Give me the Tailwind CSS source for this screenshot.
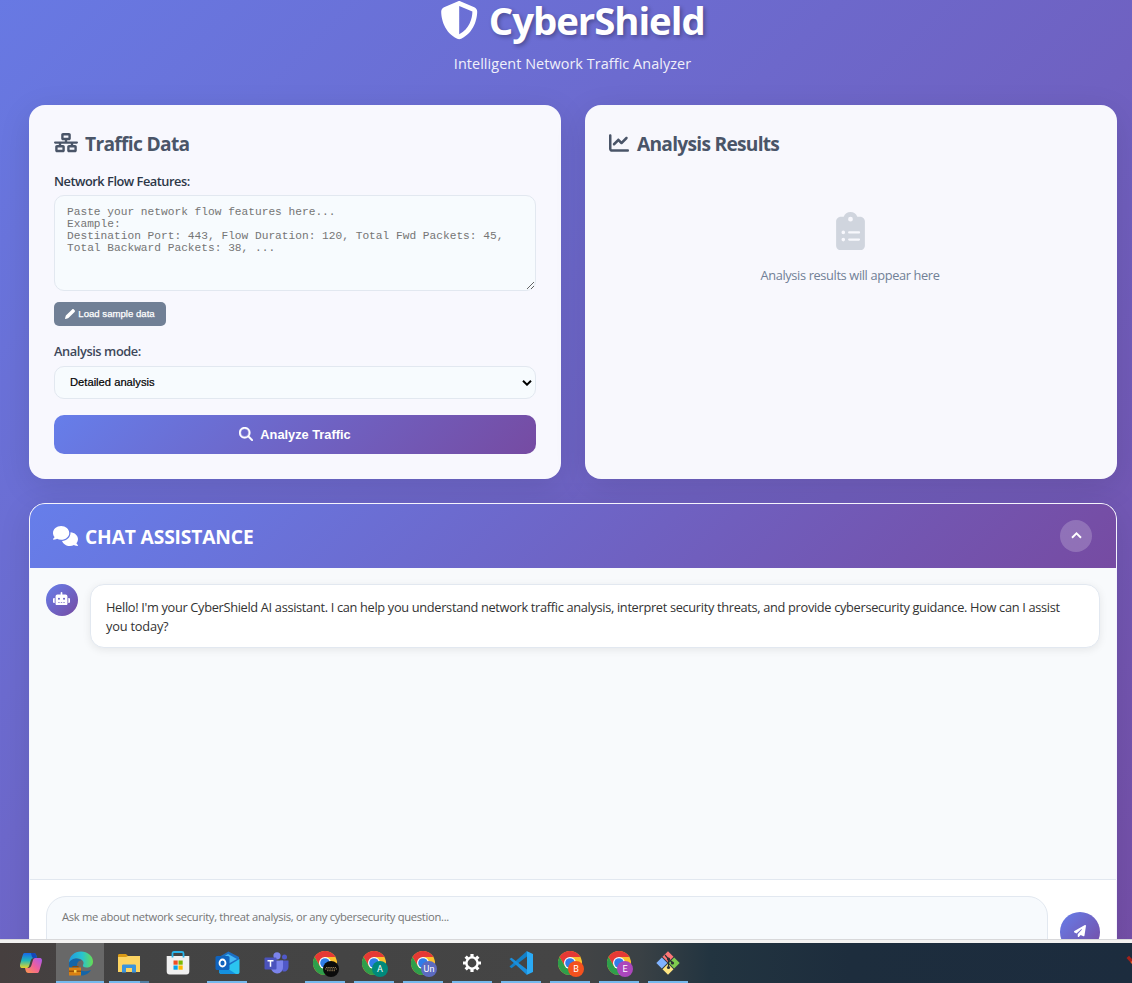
<!DOCTYPE html>
<html lang="en">
<head>
<meta charset="utf-8">
<title>CyberShield</title>
<script src="https://cdn.jsdelivr.net/npm/@tailwindcss/browser@4"></script>
</head>
<body class="w-[1132px] h-[983px] overflow-hidden flex flex-col font-['Open_Sans','Noto_Sans',sans-serif]">
<svg class="hidden">
  <defs>
    <symbol id="chrome" viewBox="0 0 24 24">
      <circle cx="12" cy="12" r="12" fill="#fbc02d"/>
      <path d="M12 6h10.4A12 12 0 0 0 1.6 6l5.2 9Z" fill="#e53935"/>
      <path d="M1.6 6A12 12 0 0 0 12 24l5.2-9-5.2 3-5.2-3Z" fill="#2e9e4b"/>
      <circle cx="12" cy="12" r="6" fill="#fff"/><circle cx="12" cy="12" r="4.8" fill="#2f7de9"/>
    </symbol>
  </defs>
</svg>
<main class="h-[939px] shrink-0 overflow-hidden bg-[linear-gradient(135deg,#667eea_-12%,#764ba2_110%)] pl-[29px] pr-[15px] flex flex-col">
  <header class="h-[105px] shrink-0 text-white text-center pr-px">
    <h1 class="h-[41px] flex items-center justify-center gap-[10px] text-[38.4px] font-bold leading-[41px] [text-shadow:2px_2px_4px_rgba(0,0,0,0.3)]">
      <svg class="size-[38.4px] overflow-visible" viewBox="0 0 512 512" fill="currentColor"><path d="M256 0c4.600 0 9.200 1 13.400 2.900L457.700 82.800c22 9.300 38.400 31 38.300 57.200c-.5 99.200-41.300 280.700-213.600 363.200c-16.700 8-36.100 8-52.800 0C57.300 420.700 16.500 239.200 16 140c-.1-26.200 16.300-47.900 38.300-57.200L242.700 2.900C246.800 1 251.400 0 256 0zm0 66.800V444.800C394 378 431.100 230.100 432 141.400L256 66.800z"/></svg>
      <span class="tracking-[-1.05px]">CyberShield</span>
    </h1>
    <p class="mt-[12px] text-[14.4px] leading-[22px] opacity-90"><span class="tracking-[0.07px]">Intelligent Network Traffic Analyzer</span></p>
  </header>
  <div class="grid grid-cols-2 gap-6 h-[374px] shrink-0">
    <section class="rounded-2xl bg-[#f8f8fe] px-[25px] pt-[25px] shadow-[0_8px_32px_rgba(0,0,0,0.1)] flex flex-col items-start">
      <h2 class="h-[27px] flex items-center gap-[7px] text-[#4a5568] text-[19.2px] font-bold">
        <svg class="w-[24px] h-[19.2px] -mt-px" viewBox="0 0 640 512" fill="currentColor"><path d="M256 64H384v64H256V64zM240 0c-26.500 0-48 21.500-48 48v96c0 26.500 21.500 48 48 48h48v32H32c-17.700 0-32 14.300-32 32s14.300 32 32 32h96v32H80c-26.500 0-48 21.500-48 48v96c0 26.500 21.500 48 48 48H240c26.500 0 48-21.500 48-48V368c0-26.500-21.500-48-48-48H192V288H448v32H400c-26.500 0-48 21.500-48 48v96c0 26.500 21.500 48 48 48H560c26.500 0 48-21.500 48-48V368c0-26.500-21.500-48-48-48H512V288h96c17.700 0 32-14.300 32-32s-14.300-32-32-32H352V192h48c26.500 0 48-21.500 48-48V48c0-26.500-21.500-48-48-48H240zM96 448V384H224v64H96zm320-64H544v64H416V384z"/></svg>
        <span class="mt-[2px] tracking-[-0.68px]">Traffic Data</span>
      </h2>
      <label class="mt-[14px] h-[20px] leading-[20px] text-[12.8px] font-semibold text-[#2d3748] tracking-[-0.48px]">Network Flow Features:</label>
      <textarea class="mt-1 w-[482px] h-[96px] shrink-0 rounded-[10px] border border-[#e2e8f0] bg-[#f7fbfe] px-3 py-[10px] resize-y font-['Liberation_Mono',monospace] text-[11.2px] leading-[12px] placeholder:text-[#757575]" placeholder="Paste your network flow features here...&#10;Example:&#10;Destination Port: 443, Flow Duration: 120, Total Fwd Packets: 45, Total Backward Packets: 38, ..."></textarea>
      <button class="mt-[11px] w-[112px] h-6 shrink-0 rounded-[5px] bg-[#718096] text-white flex items-center justify-center gap-[3px] font-['Liberation_Sans',sans-serif] text-[9.6px] [-webkit-text-stroke:0.25px_white]">
        <svg class="size-[10px]" viewBox="0 0 512 512" fill="currentColor"><path d="M362.700 19.300L58.600 323.500c-10.400 10.400-18 23.300-22.200 37.400L1 481.200C-1.500 489.700 .8 498.800 7 505s15.300 8.500 23.700 6.100l120.300-35.400c14.100-4.200 27-11.800 37.400-22.200L492.700 149.300c25-25 25-65.500 0-90.500L453.300 19.300c-25-25-65.500-25-90.500 0z"/></svg>
        <span>Load sample data</span>
      </button>
      <label class="mt-[15px] h-[20px] leading-[20px] text-[12.8px] font-semibold text-[#3d4759] tracking-[-0.41px]">Analysis mode:</label>
      <div class="mt-[5px] w-[482px] h-[33px] shrink-0 rounded-[10px] border border-[#e2e8f0] bg-[#f7fbfe] pl-[15px] pr-[3px] flex items-center justify-between font-['Liberation_Sans',sans-serif] text-[11.2px] text-black [-webkit-text-stroke:0.2px_black]">
        <span>Detailed analysis</span>
        <svg class="w-[10px] h-[6px]" viewBox="0 0 10 6" fill="none" stroke="currentColor" stroke-width="2"><path d="M1 .8 5 4.700 9 .8"/></svg>
      </div>
      <button class="mt-4 w-[482px] h-[39px] shrink-0 rounded-[10px] bg-[linear-gradient(135deg,#667eea,#764ba2)] text-white flex items-center justify-center gap-[7px] font-['Liberation_Sans',sans-serif] font-bold text-[12.8px]">
        <svg class="size-[14px] -mt-[2px]" viewBox="0 0 512 512" fill="currentColor" stroke="currentColor" stroke-width="14"><path d="M416 208c0 45.900-14.900 88.300-40 122.700L502.600 457.400c12.500 12.500 12.500 32.800 0 45.300s-32.800 12.500-45.300 0L330.700 376c-34.400 25.200-76.800 40-122.700 40C93.100 416 0 322.900 0 208S93.100 0 208 0S416 93.100 416 208zM208 352a144 144 0 1 0 0-288 144 144 0 1 0 0 288z"/></svg>
        <span>Analyze Traffic</span>
      </button>
    </section>
    <section class="rounded-2xl bg-[#f8f8fd] px-6 pt-[25px] shadow-[0_8px_32px_rgba(0,0,0,0.1)] flex flex-col">
      <h2 class="h-[27px] flex items-center gap-2 text-[#4a5568] text-[19.2px] font-bold">
        <svg class="size-[20px] -mt-[2px]" viewBox="0 0 512 512" fill="currentColor"><path d="M64 64c0-17.700-14.300-32-32-32S0 46.300 0 64V400c0 44.200 35.800 80 80 80H480c17.700 0 32-14.300 32-32s-14.300-32-32-32H80c-8.800 0-16-7.200-16-16V64zm406.600 86.600c12.500-12.500 12.500-32.800 0-45.300s-32.800-12.500-45.300 0L320 210.700l-57.400-57.400c-12.500-12.500-32.800-12.500-45.300 0l-112 112c-12.500 12.500-12.500 32.800 0 45.300s32.800 12.500 45.300 0L240 221.300l57.400 57.400c12.500 12.500 32.800 12.500 45.300 0l128-128z"/></svg>
        <span class="mt-[2px] tracking-[-0.74px]">Analysis Results</span>
      </h2>
      <div class="mt-[55px] pr-[2px] flex flex-col items-center text-[#718096]">
        <svg class="w-[29px] h-[38.400px] text-[#d0d5de]" viewBox="0 0 384 512" fill="currentColor"><path d="M192 0c-41.800 0-77.400 26.700-90.500 64H64C28.700 64 0 92.700 0 128V448c0 35.300 28.700 64 64 64H320c35.300 0 64-28.700 64-64V128c0-35.300-28.700-64-64-64H282.500C269.400 26.700 233.800 0 192 0zm0 64a32 32 0 1 1 0 64 32 32 0 1 1 0-64zM72 272a24 24 0 1 1 48 0 24 24 0 1 1 -48 0zm104-16H304c8.800 0 16 7.200 16 16s-7.200 16-16 16H176c-8.800 0-16-7.200-16-16s7.200-16 16-16zM72 368a24 24 0 1 1 48 0 24 24 0 1 1 -48 0zm88 0c0-8.800 7.200-16 16-16H304c8.800 0 16 7.200 16 16s-7.200 16-16 16H176c-8.800 0-16-7.200-16-16z"/></svg>
        <p class="mt-[15px] text-[12.8px] leading-[20px] tracking-[-0.36px]">Analysis results will appear here</p>
      </div>
    </section>
  </div>
  <section class="mt-6 h-[500px] shrink-0 rounded-2xl border border-[#f5f4fd] overflow-hidden bg-white shadow-[0_8px_32px_rgba(0,0,0,0.1)]">
    <div class="h-16 pl-[23px] pr-6 flex items-center justify-between bg-[linear-gradient(135deg,#667eea,#764ba2)] text-white">
      <h2 class="flex items-center gap-[7px] text-[19.2px] font-bold leading-[28px] mt-[2px]">
        <svg class="w-[25px] h-[20px] -mt-[2px]" viewBox="0 0 640 512" fill="currentColor"><path d="M208 352c114.900 0 208-78.800 208-176S322.900 0 208 0S0 78.800 0 176c0 38.600 14.700 74.300 39.600 103.400c-3.500 9.400-8.700 17.700-14.200 24.700c-4.800 6.200-9.700 11-13.300 14.300c-1.800 1.600-3.300 2.900-4.300 3.700c-.5 .4-.9 .7-1.100 .8l-.2 .2C1 327.200-1.400 334.400 .8 340.900S9.100 352 16 352c21.800 0 43.800-5.600 62.100-12.500c9.200-3.500 17.800-7.400 25.200-11.400C134.100 343.300 169.800 352 208 352zM448 176c0 112.300-99.100 196.900-216.500 207C255.800 457.400 336.400 512 432 512c38.200 0 73.900-8.700 104.700-23.900c7.500 4 16 7.900 25.200 11.400c18.300 6.900 40.300 12.500 62.100 12.500c6.900 0 13.100-4.500 15.200-11.100c2.100-6.600-.2-13.800-5.800-17.900l-.2-.2c-.2-.2-.6-.4-1.100-.8c-1-.8-2.500-2-4.300-3.700c-3.600-3.300-8.500-8.100-13.300-14.300c-5.500-7-10.700-15.400-14.200-24.700c24.900-29 39.600-64.700 39.600-103.400c0-92.800-84.900-168.900-192.600-175.500c.4 5.100 .6 10.300 .6 15.500z"/></svg>
        <span class="tracking-[-0.13px]">CHAT ASSISTANCE</span>
      </h2>
      <button class="size-8 rounded-full bg-white/20 flex items-center justify-center pb-[2px]">
        <svg class="w-[11px] h-[7px]" viewBox="0 0 11 7" fill="none" stroke="currentColor" stroke-width="1.900"><path d="M1 5.700 5.500 1.400 10 5.700"/></svg>
      </button>
    </div>
    <div class="h-[312px] bg-[#f8fafc] border-b border-[#e2e8f0] p-4 flex items-start gap-3">
      <div class="size-8 shrink-0 rounded-full bg-[linear-gradient(135deg,#667eea,#764ba2)] text-white flex items-center justify-center pb-[3px] pr-px">
        <svg class="w-[17px] h-[13.600px]" viewBox="0 0 640 512" fill="currentColor"><path d="M320 0c17.700 0 32 14.300 32 32V96H472c39.800 0 72 32.200 72 72V440c0 39.800-32.200 72-72 72H168c-39.800 0-72-32.200-72-72V168c0-39.800 32.200-72 72-72H288V32c0-17.700 14.300-32 32-32zM208 384c-8.800 0-16 7.200-16 16s7.200 16 16 16h32c8.800 0 16-7.200 16-16s-7.200-16-16-16H208zm96 0c-8.800 0-16 7.200-16 16s7.200 16 16 16h32c8.800 0 16-7.200 16-16s-7.200-16-16-16H304zm96 0c-8.800 0-16 7.200-16 16s7.200 16 16 16h32c8.800 0 16-7.200 16-16s-7.200-16-16-16H400zM264 256a40 40 0 1 0 -80 0 40 40 0 1 0 80 0zm152 40a40 40 0 1 0 0-80 40 40 0 1 0 0 80zM48 224H64V416H48c-26.500 0-48-21.500-48-48V272c0-26.500 21.500-48 48-48zm544 0c26.500 0 48 21.500 48 48v96c0 26.500-21.500 48-48 48H576V224h16z"/></svg>
      </div>
      <div class="h-16 flex-1 rounded-[14px] border border-[#e2e8f0] bg-white px-[15px] pt-[13px] text-[12.8px] leading-[19px] text-[#333] whitespace-nowrap shadow-[0_2px_8px_rgba(0,0,0,0.08)]"><span class="tracking-[-0.325px]">Hello! I'm your CyberShield AI assistant. I can help you understand network traffic analysis, interpret security threats, and provide cybersecurity guidance. How can I assist</span><br><span class="tracking-[-0.2px]">you today?</span></div>
    </div>
    <div class="p-4 flex items-center gap-3">
      <div class="h-[72px] flex-1 rounded-[20px] border border-[#e2e8f0] bg-[#f7fafd] px-[15px] pt-[11px] text-[11.2px] leading-[18px] text-[#757575] tracking-[-0.305px]">Ask me about network security, threat analysis, or any cybersecurity question...</div>
      <button class="size-10 shrink-0 rounded-full bg-[linear-gradient(135deg,#667eea,#764ba2)] text-white flex items-center justify-center pb-[2px]">
        <svg class="size-[12px]" viewBox="0 0 512 512" fill="currentColor"><path d="M498.100 5.600c10.100 7 15.400 19.100 13.500 31.200l-64 416c-1.500 9.700-7.400 18.200-16 23s-18.900 5.400-28 1.600L284 427.700l-68.500 74.100c-8.900 9.700-22.900 12.900-35.200 8.100S160 493.200 160 480V396.400c0-4 1.500-7.800 4.200-10.700L331.800 202.800c5.800-6.300 5.600-16-.4-22s-15.700-6.400-22-.7L106 360.800 17.700 316.600C7.100 311.300 .3 300.700 0 288.900s5.900-22.800 16.100-28.700l448-256c10.700-6.100 23.900-5.500 34 1.400z"/></svg>
      </button>
    </div>
  </section>
</main>
<footer class="h-[44px] shrink-0 flex flex-col">
  <div class="h-px bg-[#d8d8da]"></div>
  <div class="h-[3px] bg-[#f3f2f1]"></div>
  <div class="h-[40px] bg-[linear-gradient(90deg,#463f3f_0px,#434343_120px,#454545_560px,#3a4145_640px,#223440_710px,#1d2d3d_850px,#1c2c3e)] flex gap-[9px] pl-[11px] relative overflow-hidden">
    <div class="w-10 shrink-0 flex items-center justify-center">
      <svg class="w-[24px] h-[22px]" viewBox="0 0 24 22"><defs><linearGradient id="ca" x1="0" y1="0" x2="0" y2="1"><stop stop-color="#1668e8"/><stop offset=".5" stop-color="#20b8b8"/><stop offset="1" stop-color="#e8d428"/></linearGradient><linearGradient id="cb" x1="1" y1="0" x2="0" y2="1"><stop stop-color="#a85af0"/><stop offset=".5" stop-color="#f0609a"/><stop offset="1" stop-color="#ff9a4a"/></linearGradient></defs><path d="M5.500 1h9c2 0 2.500 1 3 3l.6 2h-3c-2 0-3 1-3.500 3l-1.500 5c-.5 1.500-1.400 2-3 2H3.500C1 16 .6 14 1.300 11.500l2-7C4 2 4.500 1 5.500 1Z" fill="url(#ca)"/><path d="M18.500 21h-9c-2 0-2.500-1-3-3L6 16h3c2 0 3-1 3.500-3L14 8c.5-1.500 1.400-2 3-2h3.500c2.500 0 2.900 2 2.200 4.500l-2 7c-.7 2.500-1.200 3.500-2.200 3.500Z" fill="url(#cb)"/><path d="M12 1h2.500c2 0 2.500 1 3 3l.6 2h-3c-1.500 0-2-.6-2.400-2Z" fill="#1547b8"/></svg>
    </div>
    <div class="w-12 -mx-1 shrink-0 flex items-center justify-center bg-[#686868] border-b-2 border-[#76b9ed] pt-[2px]">
      <svg class="size-[25px]" viewBox="0 0 25 25"><defs><linearGradient id="ea"><stop stop-color="#219be0"/><stop offset=".55" stop-color="#28c3cf"/><stop offset="1" stop-color="#67dc52"/></linearGradient></defs><path d="M1 12c0-7 5.500-11.500 12-11.500S25 5 25 10.500c0 4-3 6-6.500 6-3 0-4-1-3.500-2.500.6-1 .8-2 .2-3.500C14 8 11 7 8 7.500 4.500 8 2 10 1 12Z" fill="url(#ea)"/><path d="M1 12c1-3 4-4.500 7-4.500 2 0 4 .8 5.500 2-3 0-4.500 2-4.500 4.500 0 5 6 8 14 5-2.500 4-6 5.500-10.500 5.500C5.500 24.500 0 19 1 12Z" fill="#1465a8"/><path d="M5 17v-1.500h5V17" fill="none" stroke="#8a4a0c" stroke-width="1.200"/><rect x="1" y="16.500" width="12" height="8" fill="#d98012"/><rect x="1" y="19.500" width="12" height="1.500" fill="#9a5207"/><rect x="6" y="19" width="2.500" height="2.600" fill="#fbd04a"/></svg>
    </div>
    <div class="w-10 shrink-0 flex items-center justify-center bg-[linear-gradient(90deg,#76b9ed_31px,#527fa3_31px)] bg-[length:40px_2px] bg-bottom bg-no-repeat">
      <svg class="w-[22px] h-[19px]" viewBox="0 0 22 19"><path d="M0 1.500C0 .5.500 0 1.500 0H8l2 2h11v5H0Z" fill="#d99a17"/><path d="M0 3h8l2-1h12v16H0Z" fill="#fcd462"/><path d="M4 18.500V12c0-1 .5-1.500 1.500-1.500h11c1 0 1.500.5 1.500 1.500v6.500h-4V14H8v4.500Z" fill="#3a94dc"/></svg>
    </div>
    <div class="w-10 shrink-0 flex items-center justify-center">
      <svg class="w-[24px] h-[24px]" viewBox="0 0 24 24"><path d="M6.500 6.500V2.500C6.500 1.500 7 1 8 1h8c1 0 1.500.5 1.500 1.500v4" fill="none" stroke="#28b4ea" stroke-width="1.800"/><path d="M.7 5h22.600v15.500c0 2-1 3-3 3H3.700c-2 0-3-1-3-3Z" fill="#f0f0f0"/><path d="M6.500 6.500V5M17.500 6.500V5" stroke="#28b4ea" stroke-width="1.800"/><path d="M7.500 9.500h4.200v4.200H7.500Z" fill="#f04e25"/><path d="M12.500 9.500h4.200v4.200h-4.200Z" fill="#7db900"/><path d="M7.500 14.500h4.200v4.200H7.500Z" fill="#06a2ed"/><path d="M12.500 14.500h4.200v4.200h-4.200Z" fill="#fdb800"/></svg>
    </div>
    <div class="w-10 shrink-0 flex items-center justify-center border-b-2 border-[#76b9ed] pt-[2px]">
      <svg class="w-[25px] h-[24px]" viewBox="0 0 25 24"><path d="M4 6 13.500.5 24 6v12H4Z" fill="#1b6fc4"/><path d="M13 3 22 8l-9 5-8-5Z" fill="#45b8f4"/><path d="M24.500 8v13c0 1.500-.8 2-2 2H6.500C5 23 4 22 4 20.500L24.500 8Z" fill="#2bc4f0"/><path d="m4 12 17 11H6.500C5 23 4 22 4 20.500Z" fill="#1490df"/><rect x=".5" y="5" width="14" height="14" rx="1.500" fill="#0f63bd"/><ellipse cx="7.500" cy="12" rx="3" ry="3.500" fill="none" stroke="#fff" stroke-width="1.800"/></svg>
    </div>
    <div class="w-10 shrink-0 flex items-center justify-center">
      <svg class="w-[25px] h-[22px]" viewBox="0 0 25 22"><circle cx="20.500" cy="5" r="2.500" fill="#5059c9"/><path d="M16 8.500h8.500V15a4.500 4.500 0 0 1-6 4.300Z" fill="#5059c9"/><circle cx="13" cy="3.800" r="3.600" fill="#7b83eb"/><path d="M7 8.500h12V15a6 6 0 0 1-12 1Z" fill="#7b83eb"/><rect x=".5" y="5.500" width="12" height="12" rx="1" fill="#4b53bc"/><path d="M3.500 8.800h6M6.500 8.800v6" stroke="#fff" stroke-width="1.500"/></svg>
    </div>
    <div class="w-10 shrink-0 flex items-center justify-center border-b-2 border-[#76b9ed] pt-[2px]">
      <div class="relative"><svg class="size-6"><use href="#chrome"/></svg><div class="absolute left-[10px] top-[10px] size-[16px] rounded-full bg-[#0b0b0b] flex items-center justify-center"><svg class="w-3 h-[6px]" viewBox="0 0 12 6"><path d="M0 3h12M1 1.500h10M2 4.700h8" stroke="#8f7a58" stroke-width="1" stroke-dasharray="1.500 .7"/></svg></div></div>
    </div>
    <div class="w-10 shrink-0 flex items-center justify-center border-b-2 border-[#76b9ed] pt-[2px]">
      <div class="relative"><svg class="size-6"><use href="#chrome"/></svg><div class="absolute left-[10px] top-[10px] size-[16px] rounded-full bg-[#00897b] text-white text-[9px] leading-[16px] text-center font-['Roboto',sans-serif]">A</div></div>
    </div>
    <div class="w-10 shrink-0 flex items-center justify-center border-b-2 border-[#76b9ed] pt-[2px]">
      <div class="relative"><svg class="size-6"><use href="#chrome"/></svg><div class="absolute left-[10px] top-[10px] size-[16px] rounded-full bg-[#5c6bc0] text-white text-[9px] leading-[16px] text-center font-['Roboto',sans-serif]">Un</div></div>
    </div>
    <div class="w-10 shrink-0 flex items-center justify-center border-b-2 border-[#76b9ed] pt-[2px]">
      <svg class="size-[18px]" viewBox="0 0 18 18"><circle cx="9" cy="9" r="5.600" fill="none" stroke="#fff" stroke-width="2.400"/><g stroke="#fff" stroke-width="3.200"><path d="M9 0v3M9 15v3M0 9h3M15 9h3M2.640 2.640l2.100 2.100M13.260 13.260l2.100 2.100M2.640 15.360l2.100-2.100M13.260 4.740l2.100-2.100"/></g></svg>
    </div>
    <div class="w-10 shrink-0 flex items-center justify-center border-b-2 border-[#76b9ed] pt-[2px]">
      <svg class="size-6" viewBox="0 0 24 24"><path d="M18 0 .5 15.500l2 1.700L18 5.500Z" fill="#1280c8"/><path d="M.5 8 2.500 6.800 18 18.500V24Z" fill="#1b8fdc"/><path d="M17.500 0 24 3v18l-6.500 3c.3-.3.500-.8.500-1.500v-21c0-.7-.2-1.200-.5-1.500Z" fill="#2aaaf5"/></svg>
    </div>
    <div class="w-10 shrink-0 flex items-center justify-center border-b-2 border-[#76b9ed] pt-[2px]">
      <div class="relative"><svg class="size-6"><use href="#chrome"/></svg><div class="absolute left-[10px] top-[10px] size-[16px] rounded-full bg-[#f4511e] text-white text-[9px] leading-[16px] text-center font-['Roboto',sans-serif]">B</div></div>
    </div>
    <div class="w-10 shrink-0 flex items-center justify-center border-b-2 border-[#76b9ed] pt-[2px]">
      <div class="relative"><svg class="size-6"><use href="#chrome"/></svg><div class="absolute left-[10px] top-[10px] size-[16px] rounded-full bg-[#ab47bc] text-white text-[9px] leading-[16px] text-center font-['Roboto',sans-serif]">E</div></div>
    </div>
    <div class="w-10 shrink-0 flex items-center justify-center border-b-2 border-[#76b9ed] pt-[2px]">
      <svg class="size-6" viewBox="0 0 24 24"><path d="m12 .3 5.500 5.500L12 11.300 6.500 5.800Z" fill="#f77"/><path d="M5.800 6.500 11.300 12l-5.500 5.500L.3 12Z" fill="#80b3ff"/><path d="m18.200 6.500 5.500 5.500-5.500 5.500L12.700 12Z" fill="#7fcc4f"/><path d="m12 12.700 5.500 5.500-5.500 5.500-5.500-5.500Z" fill="#fde582"/><path d="M9 4 12.500 8v9M12.500 8l4 3.500" fill="none" stroke="#2b3136" stroke-width="1.200"/><circle cx="12.500" cy="8" r="1.600" fill="#2b3136"/><circle cx="12.500" cy="16.500" r="1.600" fill="#2b3136"/><circle cx="16.500" cy="12" r="1.600" fill="#2b3136"/></svg>
    </div>
    <svg class="absolute right-0 top-[12px] w-[6px] h-[12px]" viewBox="0 0 6 12"><path d="M.5 3 3 .8 6 4v5Z" fill="#a3211a"/><path d="m4.500 7 1.500-1v3Z" fill="#e8622a"/></svg>
  </div>
</footer>
</body>
</html>
